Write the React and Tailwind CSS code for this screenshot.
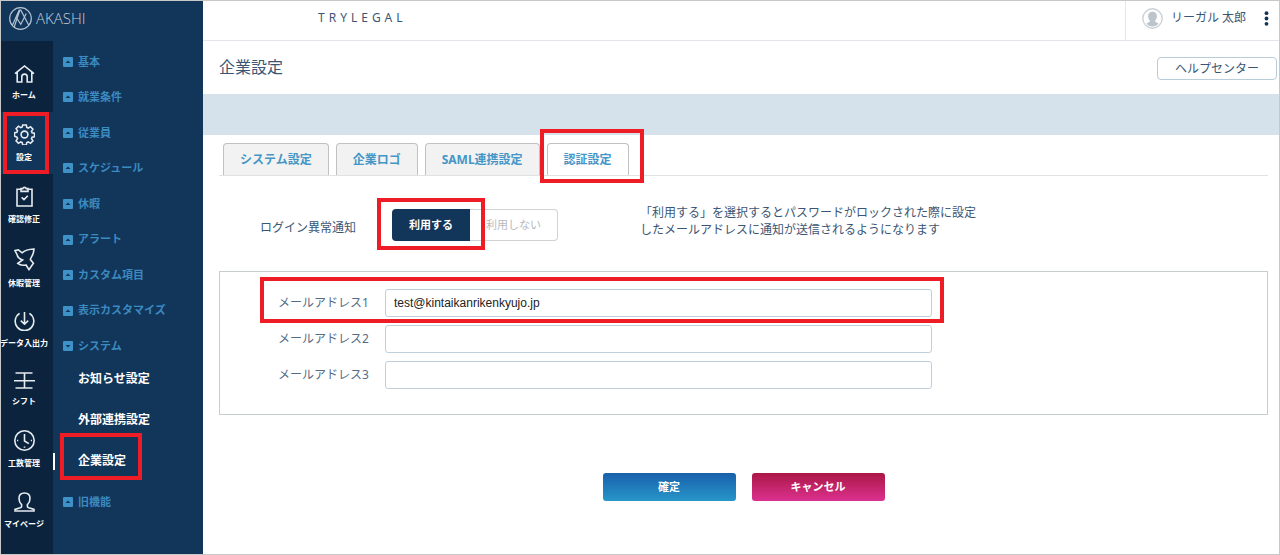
import { useState } from "react";

const Logo = () => (
  <svg width="23" height="23" viewBox="0 0 23 23" fill="none" stroke="#b4c4d4" strokeWidth="1.2" aria-hidden="true">
    <circle cx="11.5" cy="11.5" r="10.8" />
    <path d="M3.4 18.2 10.2 3.2h1.6l8 15M7 10l4.800 7.400L17.200 6.400M11 2.800 5.200 20" />
  </svg>
);

const icons = {
  home: (
    <svg width="21" height="18" viewBox="0 0 21 18">
      <path d="M1 8.6 10.5 1 20 8.6M3.2 7v10h4.6v-5.2a2.7 2.7 0 0 1 5.4 0V17h4.6V7" />
    </svg>
  ),
  gear: (
    <svg width="21" height="21" viewBox="0 0 21 21">
      <circle cx="10.5" cy="10.5" r="3.4" />
      <path d="M8.700 1h3.600l.5 2.500 1.500.6 2.200-1.400 2.400 2.400-1.400 2.200.6 1.500 2.400.5v3.400l-2.400.5-.6 1.500 1.400 2.200-2.400 2.400-2.200-1.400-1.500.6-.5 2.500H8.700l-.5-2.500-1.500-.6-2.200 1.400-2.400-2.400 1.400-2.200-.6-1.500L.5 12.200V8.800l2.400-.5.6-1.500-1.400-2.200 2.400-2.400 2.200 1.400 1.500-.6z" />
    </svg>
  ),
  clipboard: (
    <svg width="17" height="21" viewBox="0 0 17 21">
      <path d="M4.5 3.2H1V20h15V3.2h-3.5M5 5.4h7V2.6h-1.8a1.8 1.8 0 0 0-3.4 0H5zM5.6 11.4l2.4 2.2 3.8-3.8" />
    </svg>
  ),
  bird: (
    <svg width="21" height="23" viewBox="0 0 21 23">
      <path d="M1 2.600 4.400 1.800 8 4.800C10.500 2.400 15 1.200 20 1c-.2 3-1 5.400-2.200 7.400-1 1.600-1.400 2.200-1.400 3.200l3 3.600-4.400 6.400-3-4.600c-3.400.6-6.200.2-8.200-1.600L8.600 12C5.600 11 3.400 9 3 6.400z" />
    </svg>
  ),
  download: (
    <svg width="21" height="19" viewBox="0 0 21 19">
      <path d="M5.600 1.400a9.300 9.300 0 1 0 9.800 0M10.5 0v12M6.8 8.6l3.7 3.6 3.7-3.6" />
    </svg>
  ),
  shift: (
    <svg width="21" height="17" viewBox="0 0 21 17">
      <path d="M1.500 1h17M0 8.8h21M1.500 16h17M10.5 1v15" />
    </svg>
  ),
  clock: (
    <svg width="21" height="21" viewBox="0 0 21 21">
      <circle cx="10.5" cy="10.5" r="9.7" />
      <path d="M10.5 4v7l4.4 2.600M3 10.5h1.200M16.800 10.5h1.200M10.5 16.600v1.200" />
    </svg>
  ),
  user: (
    <svg width="21" height="20" viewBox="0 0 21 20">
      <path d="M7.6 12.6C5.6 10.8 5 8.8 5 6.4 5 3 7.2 1 10.5 1S16 3 16 6.4c0 2.4-.6 4.4-2.6 6.2v1.8c0 .8.6 1 1.4 1.3l5.2 1.7V19H1v-1.6l5.2-1.7c.8-.3 1.4-.5 1.4-1.3z" />
    </svg>
  ),
};

const railItems = [
  { icon: "home", label: "ホーム" },
  { icon: "gear", label: "設定", active: true },
  { icon: "clipboard", label: "確認修正" },
  { icon: "bird", label: "休暇管理" },
  { icon: "download", label: "データ入出力" },
  { icon: "shift", label: "シフト" },
  { icon: "clock", label: "工数管理" },
  { icon: "user", label: "マイページ" },
];

const menuItems = ["基本", "就業条件", "従業員", "スケジュール", "休暇", "アラート", "カスタム項目", "表示カスタマイズ", "システム"];
const subItems = ["お知らせ設定", "外部連携設定", "企業設定"];
const tabs = ["システム設定", "企業ロゴ", "SAML連携設定", "認証設定"];

// red frame drawn over the element it points at
const Frame = ({ className }) => (
  <span className={`pointer-events-none absolute z-10 border-4 border-[#ee1c25] ${className}`} />
);

const MenuLink = ({ label, open }) => (
  <a href="#" className="flex items-center gap-[5px] pl-[10px] text-[11px] font-bold text-[#3b8ac0]">
    <svg width="10" height="10" viewBox="0 0 10 10" aria-hidden="true">
      <rect width="10" height="10" rx="1" fill="#3f92c8" />
      <path d={open ? "M2.5 4h5L5 6.500z" : "M2.5 6h5L5 3.500z"} fill="#12355a" />
    </svg>
    {label}
  </a>
);

function Sidebar() {
  return (
    <aside className="flex w-[202px] shrink-0 flex-col bg-[#12355a]">
      <a href="#" className="flex h-10 items-center gap-1 pb-[5px] pl-2 font-['Open_Sans',sans-serif] text-[15px] font-light text-[#c3d0dc]">
        <Logo />
        AKASHI
      </a>
      <div className="flex flex-1">
        <nav className="w-[52px] shrink-0 bg-[#0c233d] pt-3">
          {railItems.map((item) => (
            <a
              key={item.label}
              href="#"
              className={`relative flex flex-col items-center gap-[6px] pt-3 pb-[11px] text-[8px] leading-3 font-bold whitespace-nowrap text-white ${item.active ? "bg-[#12355a]" : ""}`}
            >
              <span className="flex fill-none stroke-[#e6ebf0] stroke-[1.6] pr-[6px]">{icons[item.icon]}</span>
              <span className="pr-[6px]">{item.label}</span>
              {item.active && <Frame className="inset-y-0 right-1 left-[2px]" />}
            </a>
          ))}
        </nav>
        <nav className="flex-1 pt-[3px]">
          <div className="flex h-80 flex-col">
            {menuItems.map((label) => (
              <div key={label} className="flex flex-1 items-center">
                <MenuLink label={label} open={label === "システム"} />
              </div>
            ))}
          </div>
          <ul className="flex flex-col gap-[11px]">
            {subItems.map((label) => (
              <li key={label} className="relative flex h-[30px] items-center pl-[25px]">
                <a href="#" className="text-xs font-bold text-white">{label}</a>
                {label === "企業設定" && (
                  <>
                    <span className="absolute left-0 h-[17px] w-[2px] bg-white" />
                    <Frame className="-top-[13px] left-[7px] h-[47px] w-[82px]" />
                  </>
                )}
              </li>
            ))}
          </ul>
          <div className="mt-2 flex h-9 items-center">
            <MenuLink label="旧機能" />
          </div>
        </nav>
      </div>
    </aside>
  );
}

function Header() {
  return (
    <header className="flex h-10 items-stretch justify-between border-b border-[#e3e6ea]">
      <div className="pt-2 pl-[115px] text-xs leading-[18px] tracking-[4px]">TRYLEGAL</div>
      <div className="flex items-center gap-2 border-l border-[#e3e6ea] pr-[10px] pb-[5px] pl-4 text-xs">
        <svg width="21" height="21" viewBox="0 0 21 21" aria-hidden="true">
          <circle cx="10.5" cy="10.5" r="9.7" fill="#fff" stroke="#ccd2d7" strokeWidth="1.4" />
          <path d="M7.800 12.500C6.400 11 6.100 9.500 6.100 8c0-2.600 1.600-4.200 4.400-4.200s4.400 1.600 4.400 4.200c0 1.500-.3 3-1.700 4.500v1.300l3.400 1.600c-1.400 1.900-3.500 3-6.100 3s-4.700-1.100-6.100-3l3.400-1.600z" fill="#bcc5cc" />
        </svg>
        <span>リーガル 太郎</span>
        <button type="button" aria-label="メニュー" className="ml-[10px] flex">
          <svg width="5" height="15" viewBox="0 0 5 15" fill="#12355a">
            <circle cx="2.5" cy="2.2" r="1.9" />
            <circle cx="2.5" cy="7.5" r="1.9" />
            <circle cx="2.5" cy="12.8" r="1.9" />
          </svg>
        </button>
      </div>
    </header>
  );
}

export default function App() {
  const [tab, setTab] = useState("認証設定");
  const [notify, setNotify] = useState(true);
  const [mails, setMails] = useState(["test@kintaikanrikenkyujo.jp", "", ""]);

  return (
    <div className="flex min-h-screen border border-[#c8c8c8] bg-white font-['Noto_Sans','Noto_Sans_CJK_JP',sans-serif] text-[#3b5674]">
      <Sidebar />
      <div className="min-w-0 flex-1">
        <Header />
        <div className="flex h-[53px] items-start justify-between pt-4 pr-[2px] pl-4">
          <h1 className="text-base leading-5">企業設定</h1>
          <button type="button" className="h-[23px] w-[120px] rounded border border-[#b9ccda] text-xs">ヘルプセンター</button>
        </div>
        <div className="h-[41px] bg-[#d5e2eb]" />

        <main className="pr-[11px] pl-4">
          <div role="tablist" className="mt-2 flex gap-[7px] border-b border-[#e0e3e5] pl-1">
            {tabs.map((name) => (
              <button
                key={name}
                type="button"
                role="tab"
                aria-selected={tab === name}
                onClick={() => setTab(name)}
                className={`relative h-8 rounded-t border border-b-0 border-[#bfc1c2] px-4 text-xs font-bold text-[#4596c6] ${tab === name ? "bg-white" : "bg-[#f2f2f2]"}`}
              >
                {name}
                {name === "認証設定" && <Frame className="-top-[15px] -right-4 -bottom-2 -left-2" />}
              </button>
            ))}
          </div>

          <div className="mt-7 flex pl-[41px] text-xs">
            <span id="notify" className="w-[132px] pt-4">ログイン異常通知</span>
            <div role="group" aria-labelledby="notify" className="relative mt-[5px] flex h-8 w-[166px] text-[11px]">
              <button
                type="button"
                onClick={() => setNotify(true)}
                className={`w-[78px] rounded-l ${notify ? "bg-[#12355a] font-bold text-white" : "border border-[#cfd3d6] text-[#b5babf]"}`}
              >
                利用する
              </button>
              <button
                type="button"
                onClick={() => setNotify(false)}
                className={`flex-1 rounded-r ${notify ? "border border-l-0 border-[#cfd3d6] text-[#b5babf]" : "bg-[#12355a] font-bold text-white"}`}
              >
                利用しない
              </button>
              <Frame className="-top-[11px] -left-[15px] h-[52px] w-[108px]" />
            </div>
            <p className="ml-[82px] leading-[17px]">
              「利用する」を選択するとパスワードがロックされた際に設定
              <br />
              したメールアドレスに通知が送信されるようになります
            </p>
          </div>

          <div className="mt-[30px] flex flex-col gap-2 border border-[#c8cdd0] pt-[17px] pb-[25px] pl-[58px]">
            {mails.map((mail, i) => (
              <div key={i} className="flex items-center">
                <label htmlFor={`mail${i}`} className="w-[107px] text-xs text-[#566c85]">メールアドレス{i + 1}</label>
                <div className="relative w-[547px]">
                  <input
                    id={`mail${i}`}
                    type="email"
                    value={mail}
                    onChange={(e) => setMails(mails.map((m, n) => (n === i ? e.target.value : m)))}
                    className="block h-7 w-full rounded-[3px] border border-[#bfd0dc] px-2 font-['Liberation_Sans',sans-serif] text-xs text-[#222]"
                  />
                  {i === 0 && <Frame className="-top-3 -right-3 -bottom-[6px] -left-[125px]" />}
                </div>
              </div>
            ))}
          </div>

          <div className="mt-[58px] flex justify-center gap-4 text-[11px] font-bold text-white">
            <button type="submit" className="h-7 w-[133px] rounded-[3px] bg-linear-to-b from-[#1a60ac] to-[#2896c8]">確定</button>
            <button type="button" className="h-7 w-[133px] rounded-[3px] bg-linear-to-b from-[#ab1645] to-[#dc3090]">キャンセル</button>
          </div>
        </main>
      </div>
    </div>
  );
}
